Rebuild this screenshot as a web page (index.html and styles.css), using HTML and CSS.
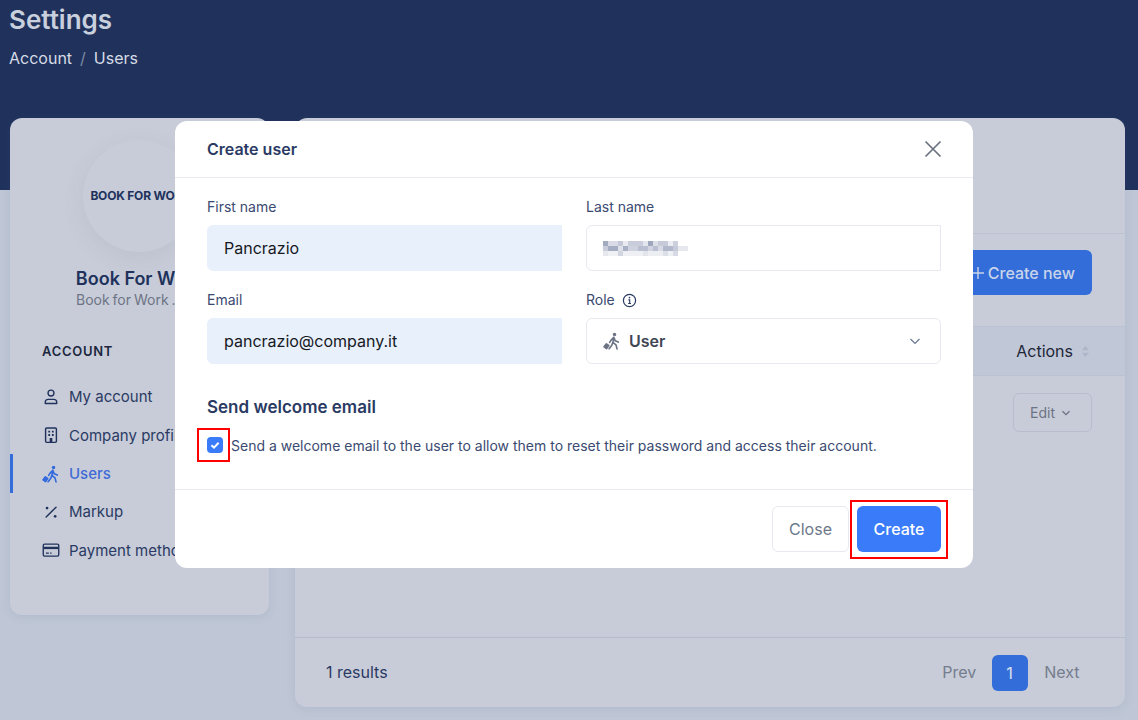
FILE: index.html
```html
<!DOCTYPE html>
<html lang="en">
<head>
<meta charset="utf-8">
<title>Settings - Users</title>
<link rel="stylesheet" href="styles.css">
</head>
<body>
<svg class="defs" width="0" height="0">
  <symbol id="walker" viewBox="0 0 20 20">
    <circle cx="12.8" cy="2.8" r="1.9" fill="currentColor"/>
    <path d="M12 6 L9 9 L7.4 11.6 M12 6 L13.6 9.8 L17 11.2 M12 6.2 L11 11.5 L14.4 14.2 L15.6 18.8 M11 11.5 L9.6 15 L6.8 18.6" fill="none" stroke="currentColor" stroke-width="1.8" stroke-linecap="round" stroke-linejoin="round"/>
    <rect x="1.2" y="12.8" width="5.2" height="6" rx="1" transform="rotate(35 3.8 15.8)" fill="currentColor"/>
  </symbol>
</svg>

<header class="hero">
  <h1 class="title">Settings</h1>
  <nav class="crumbs"><span>Account</span><span class="sep">/</span><span>Users</span></nav>
</header>

<div class="columns">
  <aside class="side card">
    <div class="avatar"><span class="logo">BOOK FOR WORK</span></div>
    <div class="org-name">Book For Work</div>
    <div class="org-sub">Book for Work ...</div>
    <div class="side-head">ACCOUNT</div>
    <ul class="menu">
      <li class="menu-item">
        <svg class="mi" viewBox="0 0 20 20" fill="none" stroke="currentColor" stroke-width="1.5"><circle cx="10" cy="5.6" r="3.3"/><path d="M3.6 17.2v-1.4c0-2 1.6-3.2 3.4-3.2h6c1.8 0 3.4 1.2 3.4 3.2v1.4z" stroke-linejoin="round"/></svg>
        <span>My account</span>
      </li>
      <li class="menu-item">
        <svg class="mi" viewBox="0 0 20 20" fill="none"><rect x="4" y="2.2" width="12" height="16" rx="1.2" stroke="currentColor" stroke-width="1.6"/><path d="M7 5.2h2v2H7zM11 5.2h2v2h-2zM7 9h2v2H7zM11 9h2v2h-2zM8.5 13.2h3v5h-3z" fill="currentColor"/></svg>
        <span>Company profile</span>
      </li>
      <li class="menu-item active">
        <svg class="mi"><use href="#walker"/></svg>
        <span>Users</span>
      </li>
      <li class="menu-item">
        <svg class="mi" viewBox="0 0 20 20" fill="none"><path d="M15.6 4.6 4.6 15.6" stroke="currentColor" stroke-width="1.6" stroke-linecap="round"/><circle cx="5.6" cy="5.6" r="1.5" fill="currentColor"/><circle cx="14.6" cy="14.8" r="1.5" fill="currentColor"/></svg>
        <span>Markup</span>
      </li>
      <li class="menu-item">
        <svg class="mi" viewBox="0 0 20 20" fill="none"><rect x="1.4" y="3.4" width="17.2" height="13.4" rx="1.4" stroke="currentColor" stroke-width="1.5"/><path d="M1.6 6.4h16.8v2.6H1.6z" fill="currentColor"/><path d="M4.4 13.4h3.2M9 13.4h1.6" stroke="currentColor" stroke-width="1.3"/></svg>
        <span>Payment methods</span>
      </li>
    </ul>
  </aside>

  <main class="main card">
    <div class="main-top"></div>
    <div class="toolbar">
      <div class="btn-new">
        <svg class="plus" viewBox="0 0 12 12" fill="none" stroke="currentColor" stroke-width="1.4"><path d="M6 0V12M0 6H12"/></svg>
        <span>Create new</span>
      </div>
    </div>
    <div class="thead">
      <span>Actions</span>
      <svg class="sort" viewBox="0 0 10 14"><path d="M5 1 9 5.6H1zM5 13 1 8.4h8z"/></svg>
    </div>
    <div class="tbody">
      <div class="btn-edit">Edit
        <svg class="edit-chev" viewBox="0 0 10 10" fill="none" stroke="currentColor" stroke-width="1.3"><path d="M1.5 3.2 5 6.6 8.5 3.2"/></svg>
      </div>
    </div>
    <footer class="pager">
      <span class="results">1 results</span>
      <div class="pages">
        <span class="page-link prev">Prev</span>
        <span class="page-num">1</span>
        <span class="page-link next">Next</span>
      </div>
    </footer>
  </main>
</div>

<section class="modal">
  <div class="modal-head">
    <h2 class="modal-title">Create user</h2>
    <svg class="modal-x" viewBox="0 0 18 18" fill="none" stroke="currentColor" stroke-width="1.7"><path d="M1.5 1.5 16.5 16.5M16.5 1.5 1.5 16.5"/></svg>
  </div>
  <div class="modal-body">
    <div class="form-grid">
      <div class="field">
        <label class="lbl">First name</label>
        <div class="input filled">Pancrazio</div>
      </div>
      <div class="field">
        <label class="lbl">Last name</label>
        <div class="input square-right">
          <svg class="blur" viewBox="0 0 85 15" shape-rendering="crispEdges">
            <rect x="0" y="0" width="5" height="5" fill="#a3abc1"/><rect x="5" y="0" width="10" height="5" fill="#d9dce6"/><rect x="15" y="0" width="5" height="5" fill="#c4c8d7"/><rect x="20" y="0" width="5" height="5" fill="#e8eaf0"/><rect x="25" y="0" width="15" height="5" fill="#c9cddb"/><rect x="40" y="0" width="5" height="5" fill="#e3e5ec"/><rect x="45" y="0" width="5" height="5" fill="#9ea7be"/><rect x="50" y="0" width="5" height="5" fill="#dcdfe8"/><rect x="55" y="0" width="10" height="5" fill="#c6cad9"/><rect x="65" y="0" width="5" height="5" fill="#ebedf2"/><rect x="70" y="0" width="5" height="5" fill="#ccd0dc"/>
            <rect x="0" y="5" width="5" height="5" fill="#c9cddb"/><rect x="5" y="5" width="10" height="5" fill="#a5adc3"/><rect x="15" y="5" width="5" height="5" fill="#dfe1ea"/><rect x="20" y="5" width="5" height="5" fill="#a9b0c6"/><rect x="25" y="5" width="10" height="5" fill="#ced2df"/><rect x="35" y="5" width="10" height="5" fill="#b9bfd0"/><rect x="45" y="5" width="5" height="5" fill="#d2d5e1"/><rect x="50" y="5" width="5" height="5" fill="#bac0d2"/><rect x="55" y="5" width="5" height="5" fill="#d8dbe5"/><rect x="60" y="5" width="10" height="5" fill="#b2b8cb"/><rect x="70" y="5" width="5" height="5" fill="#c7cbd9"/><rect x="75" y="5" width="10" height="5" fill="#e6e8ee"/>
            <rect x="0" y="10" width="5" height="5" fill="#e6e8ee"/><rect x="5" y="10" width="10" height="5" fill="#f0f1f5"/><rect x="15" y="10" width="5" height="5" fill="#d2d5e0"/><rect x="20" y="10" width="20" height="5" fill="#eff0f4"/><rect x="40" y="10" width="5" height="5" fill="#e3e5ec"/><rect x="45" y="10" width="15" height="5" fill="#eceef2"/><rect x="60" y="10" width="5" height="5" fill="#dcdfe7"/><rect x="65" y="10" width="5" height="5" fill="#eef0f4"/><rect x="70" y="10" width="5" height="5" fill="#d7dae4"/>
          </svg>
        </div>
      </div>
      <div class="field">
        <label class="lbl">Email</label>
        <div class="input filled">pancrazio@company.it</div>
      </div>
      <div class="field">
        <label class="lbl role-lbl">Role
          <svg class="info" viewBox="0 0 16 16" fill="none" stroke="currentColor"><circle cx="8" cy="8" r="6.5" stroke-width="1.3"/><circle cx="8" cy="4.9" r=".9" fill="currentColor" stroke="none"/><path d="M6.8 7.3H8.2V11M6.6 11.2H9.6" stroke-width="1.2"/></svg>
        </label>
        <div class="input select">
          <svg class="role-ic"><use href="#walker"/></svg>
          <span class="role-val">User</span>
          <svg class="sel-chev" viewBox="0 0 12 12" fill="none" stroke="currentColor" stroke-width="1.3"><path d="M1.5 4 6 8.4 10.5 4"/></svg>
        </div>
      </div>
    </div>
    <h3 class="sub-title">Send welcome email</h3>
    <div class="check-row">
      <span class="check-wrap">
        <span class="check">
          <svg viewBox="0 0 16 16" fill="none" stroke="#fff" stroke-width="2"><path d="M4.4 8.2 7 10.6 11.6 5.8"/></svg>
        </span>
        <i class="mark mark-check"></i>
      </span>
      <span class="check-text">Send a welcome email to the user to allow them to reset their password and access their account.</span>
    </div>
  </div>
  <div class="modal-foot">
    <span class="btn btn-close">Close</span>
    <span class="btn btn-create">Create<i class="mark mark-create"></i></span>
  </div>
</section>
</body>
</html>
```
FILE: styles.css
```css
* { box-sizing: border-box; }
html, body { margin: 0; height: 720px; overflow: hidden; }
body {
  font-family: Inter, "Liberation Sans", sans-serif;
  background: linear-gradient(#20325c 0 190px, #bfc7d6 190px);
  position: relative;
  color: #2a3a63;
}
.defs { position: absolute; }

.hero { height: 118px; padding: 3px 0 0 9px; }
.title { margin: 0; font-size: 26px; line-height: 34px; font-weight: 600; color: #c8cfdd; }
.crumbs { display: flex; gap: 8px; margin-top: 9px; font-size: 16px; line-height: 24px; color: #d6dbe6; }
.sep { color: #7f8aa3; }

.columns { display: flex; align-items: flex-start; gap: 26px; padding: 0 13px 0 10px; }
.card { background: #c8ccd8; border-radius: 12px; box-shadow: 0 2px 10px rgba(80, 95, 130, .12); }

.side { width: 259px; height: 497px; flex: none; padding-top: 22px; }
.avatar {
  width: 112px; height: 112px; margin-left: 73px; border-radius: 50%;
  display: flex; align-items: center; justify-content: center;
  box-shadow: 0 6px 22px rgba(90, 100, 130, .1);
  white-space: nowrap;
}
.logo { font-size: 12px; font-weight: 700; letter-spacing: -.2px; color: #20325c; margin: 0 0 2px 3px; }
.org-name { margin-top: 16px; text-align: center; font-size: 18px; line-height: 22px; font-weight: 600; color: #20325c; }
.org-sub { padding-left: 66px; font-size: 14px; line-height: 20px; color: #6c7486; word-spacing: -1px; }
.side-head { margin: 31px 0 0 32px; font-size: 13px; line-height: 20px; font-weight: 600; letter-spacing: .7px; color: #1c2740; }
.menu { list-style: none; margin: 16.6px 0 0; padding: 0; }
.menu-item { display: flex; align-items: center; gap: 9px; height: 38.4px; padding-left: 32px; font-size: 15px; color: #2a3a63; white-space: nowrap; }
.mi { width: 18px; height: 18px; flex: none; color: #20325c; }
.menu-item.active { border-left: 3px solid #326dd9; padding-left: 29px; color: #3f6bd6; font-weight: 500; }
.menu-item.active .mi { color: #3269dc; }

.main { flex: 1; height: 589px; display: flex; flex-direction: column; border-radius: 12px; }
.main-top { height: 116px; border-bottom: 1px solid #bcc2d1; flex: none; }
.toolbar { height: 93px; flex: none; padding: 16px 33px 0 0; display: flex; justify-content: flex-end; align-items: flex-start; border-bottom: 1px solid #bcc2d1; }
.btn-new { width: 180px; height: 45px; border-radius: 6px; background: #326dd9; color: #c9d4ea; font-size: 16px; font-weight: 500; display: flex; align-items: center; justify-content: flex-end; padding-right: 17px; gap: 4px; }
.plus { width: 12px; height: 12px; }
.thead { height: 49px; flex: none; background: #c0c7d7; border-bottom: 1px solid #bcc2d1; display: flex; align-items: center; justify-content: flex-end; padding-right: 35px; gap: 8px; font-size: 16px; color: #1e2638; }
.sort { width: 9px; height: 13px; fill: #aeb6c9; }
.tbody { flex: 1; padding: 17px 33px 0 0; display: flex; justify-content: flex-end; align-items: flex-start; }
.btn-edit { width: 79px; height: 39px; border: 1px solid #b7bdcd; border-radius: 6px; display: flex; align-items: center; gap: 6px; padding-left: 16px; font-size: 14px; color: #6b7384; }
.edit-chev { width: 10px; height: 10px; }
.pager { height: 70px; flex: none; border-top: 1px solid #b6bccc; display: flex; align-items: center; justify-content: space-between; padding: 0 45.5px 2px 31px; font-size: 16px; }
.results { color: #2a3a63; }
.pages { display: flex; align-items: center; gap: 16px; }
.page-link { color: #757d8e; }
.prev { margin-right: -.5px; }
.next { margin-left: .5px; }
.page-num { width: 36px; height: 36px; margin-top: 2px; border-radius: 6px; background: #326dd9; color: #c9d4ea; display: flex; align-items: center; justify-content: center; font-weight: 500; }

.modal { position: absolute; left: 175px; top: 121px; width: 798px; height: 447px; background: #fff; border-radius: 12px; display: flex; flex-direction: column; }
.modal-head { height: 57px; flex: none; border-bottom: 1px solid #e9ebf0; display: flex; align-items: center; justify-content: space-between; padding: 0 32px; }
.modal-title { margin: 0; font-size: 16px; font-weight: 600; color: #2a3a63; }
.modal-x { width: 18px; height: 18px; margin-right: -1px; color: #6b7280; }
.modal-body { flex: 1; padding: 20px 32px 0; }
.form-grid { display: grid; grid-template-columns: 355px 355px; column-gap: 24px; row-gap: 20px; }
.lbl { display: block; font-size: 14px; line-height: 18px; margin-bottom: 7px; color: #3a4a70; height: 20px; }
.role-lbl { display: flex; align-items: center; gap: 7px; height: 18px; margin-bottom: 9px; }
.info { width: 15px; height: 15px; color: #2a3a63; }
.input { height: 46px; border: 1px solid #e7e9ee; border-radius: 6px; padding: 0 16px; display: flex; align-items: center; font-size: 16px; color: #16191f; }
.input.filled { background: #e8f0fb; border-color: #e8f0fb; border-radius: 6px 0 0 6px; }
.input.square-right { border-radius: 6px 0 0 6px; }
.blur { width: 85px; height: 15px; margin-top: 1px; }
.select { color: #3f4654; }
.role-ic { width: 18px; height: 18px; color: #6a7284; }
.role-val { margin-left: 8px; font-weight: 600; }
.sel-chev { width: 12px; height: 12px; margin: 0 3px 0 auto; color: #6b7a94; }
.sub-title { margin: 32px 0 0; font-size: 17px; line-height: 22px; font-weight: 600; color: #2a3a63; }
.check-row { display: flex; align-items: center; margin-top: 17px; height: 20px; }
.check-wrap { position: relative; width: 24px; flex: none; height: 16px; }
.check { display: block; width: 16px; height: 16px; border-radius: 4px; background: #3a7bfa; }
.check svg { display: block; }
.check-text { font-size: 14px; color: #3a4a70; white-space: nowrap; }
.mark { position: absolute; display: block; border: 2px solid #f00; pointer-events: none; }
.mark-check { left: -10px; top: -9px; width: 33px; height: 34px; }
.modal-foot { height: 79px; flex: none; border-top: 1px solid #e9ebf0; display: flex; justify-content: flex-end; align-items: flex-start; padding: 16px 32px 0 0; gap: 8px; }
.btn { height: 46px; border-radius: 6px; display: flex; align-items: center; justify-content: center; font-size: 16px; font-weight: 500; }
.btn-close { width: 77px; border: 1px solid #e7e9ee; color: #6d7889; font-weight: 400; }
.btn-create { position: relative; width: 84px; background: #3a7bfa; color: #fff; }
.mark-create { left: -7px; top: -6px; width: 98px; height: 59px; }
```
